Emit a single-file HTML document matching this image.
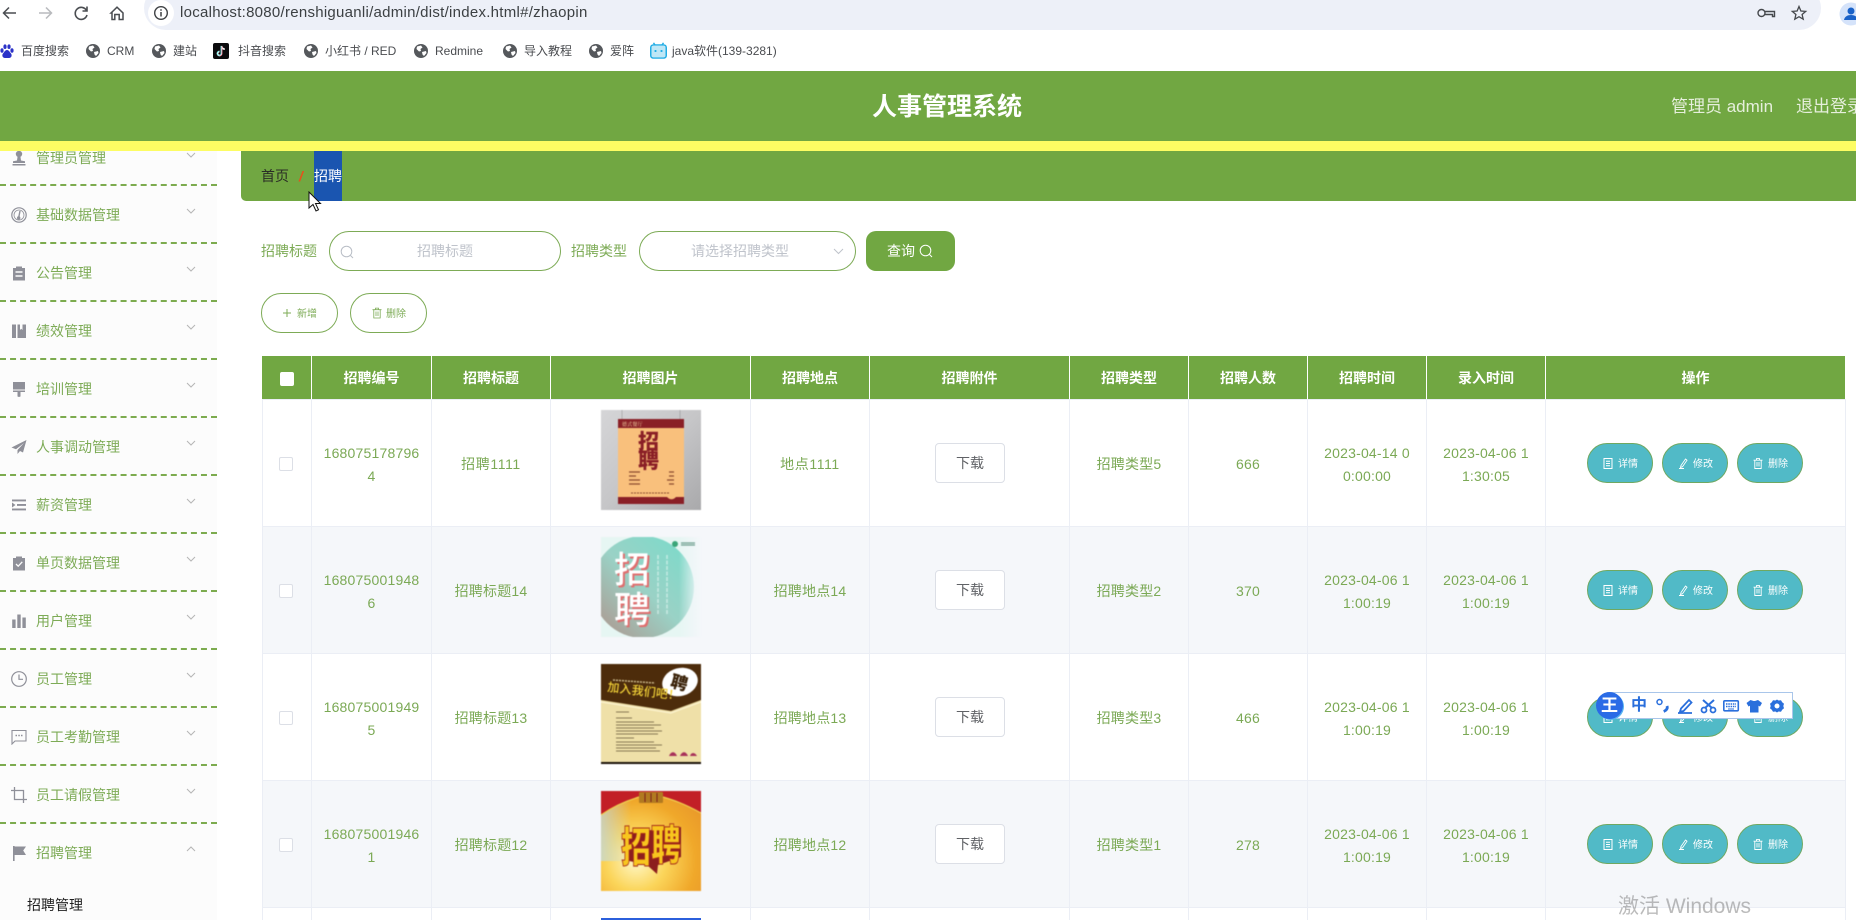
<!DOCTYPE html>
<html lang="zh-CN">
<head>
<meta charset="utf-8">
<title>人事管理系统</title>
<style>
*{box-sizing:border-box}
html,body{margin:0;padding:0;width:1856px;height:920px;overflow:hidden;background:#fff}
body{position:relative;font-family:"Liberation Sans","Noto Sans CJK SC",sans-serif;font-size:14px}
.a{position:absolute;white-space:nowrap}
svg{display:block}
/* chrome */
#pill{position:absolute;left:144px;top:-14px;width:1677px;height:44px;background:#edf0f8;border-radius:22px}
#infoc{position:absolute;left:148px;top:0;width:26px;height:26px;border-radius:13px;background:#fff}
.bm{position:absolute;top:43px;font-size:12px;line-height:16px;color:#4a4c50;white-space:nowrap}
/* header */
#hd{position:absolute;left:0;top:71px;width:1856px;height:70px;background:#71a742;z-index:5}
#yl{position:absolute;left:0;top:141px;width:1856px;height:10px;background:#fdfd63;z-index:5}
#bc{position:absolute;left:241px;top:151px;width:1615px;height:50px;background:#71a742;border-radius:0 0 0 5px;z-index:2}
/* sidebar */
#sb{position:absolute;left:0;top:151px;width:217px;height:769px;background:#fcfcfc}
.it{position:absolute;left:0;width:217px;height:58px;border-bottom:2px dashed #7cab4e}
.it span{position:absolute;left:36px;top:20px;line-height:18px;color:#7dab56;font-size:14px}
.it .ic{position:absolute;left:11px;top:21px}
.it .ch{position:absolute;left:186px;top:22px}
/* form */
.lab{position:absolute;top:241px;line-height:20px;color:#7dab56;font-size:14px}
.inp{position:absolute;top:231px;height:40px;border:1px solid #7dab56;border-radius:20px;background:#fff}
.ph{position:absolute;top:241px;line-height:20px;color:#bfc3cb;font-size:14px;white-space:nowrap}
#q{position:absolute;left:866px;top:231px;width:89px;height:40px;background:#71a742;border-radius:10px}
.ob{position:absolute;top:293px;width:77px;height:40px;border:1px solid #7dab56;border-radius:20px;background:#fff}
.ob b{position:absolute;top:13px;font-weight:400;font-size:10px;line-height:16px;color:#7dab56}
/* table */
table{position:absolute;left:262px;top:356px;width:1584px;border-collapse:separate;border-spacing:0;table-layout:fixed}
th{height:43px;background:#71a742;color:#fff;font-size:14px;font-weight:700;border-right:1px solid #fff;padding:0;text-align:center}
td{height:127px;border-right:1px solid #ebeef5;border-top:1px solid #ebeef5;padding:3px 10px 0;text-align:center;color:#7ba955;font-size:14px;line-height:23px;letter-spacing:.2px}
tr.s td{background:#f5f7fa}
td.l{border-left:1px solid #ebeef5;padding:1px 3px 0 0}
td.c{padding:0 10px}
td.m{padding:0 0 6px}
td.w{letter-spacing:.6px}
tr.e td{height:13px;padding:0;vertical-align:top}
.cb{display:inline-block;width:14px;height:14px;border:1px solid #dcdfe6;border-radius:2px;background:#fff;vertical-align:middle}
th .cb{background:#fff;border-color:#fff}
.imgc{display:block;width:100px;height:100px;margin:0 auto;filter:blur(.5px);overflow:hidden}
.dl{display:block;width:70px;height:40px;margin-left:55px;line-height:38px;border:1px solid #dcdfe6;border-radius:4px;background:#fff;color:#606266;font-size:14px;letter-spacing:0}
.ac{display:flex;justify-content:center;gap:9px;margin-left:-12px;margin-right:-12px;padding-right:1px}
.btn{position:relative;width:66px;height:40px;background:#51bac7;border:1px solid #6fa861;border-radius:20px;color:#fff;font-size:10px;line-height:38px;letter-spacing:0}
.btn svg{position:absolute;left:15px;top:14px}
.btn i{position:absolute;left:30px;top:2px;font-style:normal}
/* ime */
#ime{position:absolute;left:1607px;top:692px;width:186px;height:27px;background:#fff;border:1px solid #a9c6ea;z-index:8}
#wang{position:absolute;left:1596px;top:692px;width:27px;height:27px;border-radius:14px;background:#2a6be6;color:#fff;font-size:17px;font-weight:700;line-height:27px;text-align:center;z-index:9;box-shadow:1px 1px 0 #58b4f0}
#win{position:absolute;left:1618px;top:893px;font-size:21px;line-height:28px;color:rgba(120,120,120,.5);z-index:9;white-space:nowrap}
</style>
</head>
<body>
<svg width="0" height="0" style="position:absolute">
 <defs>
  <symbol id="globe" viewBox="0 0 14 14"><circle cx="7" cy="7" r="7" fill="#55585c"/><path d="M3 2.500l4-1 1.500 2-2 1.500.5 2-2 .5-2.500-2.500zM8 8l4-1 .5 2-2.500 3-1.500-1.500z" fill="#fff"/></symbol>
  <symbol id="down" viewBox="0 0 10 6"><path d="M1 1l4 4 4-4" fill="none" stroke="#b5b5b5" stroke-width="1"/></symbol>
  <symbol id="up" viewBox="0 0 10 6"><path d="M1 5l4-4 4 4" fill="none" stroke="#b5b5b5" stroke-width="1"/></symbol>
  <symbol id="doc" viewBox="0 0 10 11"><path d="M1 .5h8v10H1zM3 3.200h4M3 5.500h4M3 7.800h4" fill="none" stroke="#fff" stroke-width="1"/></symbol>
  <symbol id="edit" viewBox="0 0 10 11"><path d="M3 7.500L7.500 1l1.500 1.200L4.500 8.700 2.500 9.500zM1 10.500h5" fill="none" stroke="#fff" stroke-width=".9"/></symbol>
  <symbol id="trash" viewBox="0 0 10 11"><path d="M.5 2.200h9M3.500 2V.6h3V2M1.800 2.200v8.300h6.400V2.200M4 4v4.500M6 4v4.500" fill="none" stroke="#fff" stroke-width=".9"/></symbol>
 </defs>
</svg>

<!-- Browser toolbar -->
<svg class="a" style="left:0;top:0" width="140" height="28" viewBox="0 0 140 28" fill="none">
 <path d="M16 13H4M9 7.500L3.500 13 9 18.500" stroke="#4a4d51" stroke-width="1.500"/>
 <path d="M39 13h12M46 7.500l5.500 5.500-5.500 5.500" stroke="#b8babd" stroke-width="1.500"/>
 <path d="M86.500 10.500A6 6 0 1 0 87 15M87 6.500v4.500h-4.500" stroke="#4a4d51" stroke-width="1.600"/>
 <path d="M111 13l6-5.800 6 5.800v6.500h-3.800v-5h-4.400v5H112v-6.500z" stroke="#4a4d51" stroke-width="1.500"/>
</svg>
<div id="pill"></div>
<div id="infoc"></div>
<svg class="a" style="left:153px;top:5px" width="16" height="16" viewBox="0 0 16 16" fill="none"><circle cx="8" cy="8" r="6.300" stroke="#3e4144" stroke-width="1.400"/><path d="M8 7v4.500M8 4.300v1.500" stroke="#3e4144" stroke-width="1.500"/></svg>
<div class="a" style="left:180px;top:4px;font-size:15px;letter-spacing:.27px;line-height:18px;color:#3c4043">localhost:8080/renshiguanli/admin/dist/index.html#/zhaopin</div>
<svg class="a" style="left:1757px;top:5px" width="52" height="16" viewBox="0 0 52 16" fill="none">
 <circle cx="4.500" cy="8" r="3.500" stroke="#45484c" stroke-width="1.400"/><path d="M8 6.500h9.500v5h-2v-2H8" stroke="#45484c" stroke-width="1.400"/>
 <path d="M42 1.500l1.900 4.500 4.800.4-3.600 3.100 1.100 4.700-4.200-2.500-4.200 2.500 1.100-4.700-3.600-3.100 4.800-.4z" stroke="#45484c" stroke-width="1.300"/>
</svg>
<svg class="a" style="left:1839px;top:2px" width="17" height="24" viewBox="0 0 17 24"><circle cx="12" cy="12" r="11.500" fill="#d5e3fa"/><circle cx="12" cy="9" r="3.500" fill="#1a62c8"/><path d="M5 18c.6-3.500 3.500-5 7-5s6.400 1.500 7 5z" fill="#1a62c8"/></svg>

<!-- Bookmarks -->
<svg class="a" style="left:0;top:44px" width="14" height="15" viewBox="0 0 14 15"><g fill="#2b32c8"><ellipse cx="2" cy="6.500" rx="1.600" ry="2.300"/><ellipse cx="5" cy="2.700" rx="1.600" ry="2.300"/><ellipse cx="9" cy="2.700" rx="1.600" ry="2.300"/><ellipse cx="12" cy="6.500" rx="1.600" ry="2.300"/><path d="M7 6c-2 0-2.500 2-3.800 3.200C1.500 11 2.500 14 5 14h4c2.500 0 3.500-3 1.800-4.800C9.500 8 9 6 7 6z"/></g></svg>
<div class="bm" style="left:21px">百度搜索</div>
<svg class="a" style="left:86px;top:44px" width="14" height="14"><use href="#globe"/></svg>
<div class="bm" style="left:107px">CRM</div>
<svg class="a" style="left:152px;top:44px" width="14" height="14"><use href="#globe"/></svg>
<div class="bm" style="left:173px">建站</div>
<svg class="a" style="left:213px;top:43px" width="16" height="16" viewBox="0 0 16 16"><rect width="16" height="16" rx="2" fill="#0b0b0d"/><path d="M8.500 3v7.500a2 2 0 1 1-2-2M8.500 3c.3 1.800 1.500 3 3.300 3.200" fill="none" stroke="#fff" stroke-width="1.700"/><path d="M8 2.800v7.500a2 2 0 1 1-2-2" fill="none" stroke="#25f4ee" stroke-width=".5"/><path d="M9 3.400v7.500a2 2 0 0 1-2.400 2" fill="none" stroke="#fe2c55" stroke-width=".5"/></svg>
<div class="bm" style="left:238px">抖音搜索</div>
<svg class="a" style="left:304px;top:44px" width="14" height="14"><use href="#globe"/></svg>
<div class="bm" style="left:325px">小红书 / RED</div>
<svg class="a" style="left:414px;top:44px" width="14" height="14"><use href="#globe"/></svg>
<div class="bm" style="left:435px">Redmine</div>
<svg class="a" style="left:503px;top:44px" width="14" height="14"><use href="#globe"/></svg>
<div class="bm" style="left:524px">导入教程</div>
<svg class="a" style="left:589px;top:44px" width="14" height="14"><use href="#globe"/></svg>
<div class="bm" style="left:610px">爱阵</div>
<svg class="a" style="left:650px;top:42px" width="17" height="17" viewBox="0 0 17 17"><path d="M5 3L3.500 .8M12 3l1.500-2.200" stroke="#23ade5" stroke-width="1.400"/><rect x=".8" y="3" width="15.400" height="13" rx="2.500" fill="none" stroke="#23ade5" stroke-width="1.600"/><rect x="1.500" y="3.800" width="14" height="11.400" rx="2" fill="#bfe7f6"/><path d="M5.500 8v2M11.500 8v2" stroke="#23ade5" stroke-width="1.800"/></svg>
<div class="bm" style="left:672px">java软件(139-3281)</div>

<!-- Sidebar -->
<div id="sb"></div>
<div class="it" style="top:129px;height:57px"><svg class="ic" style="top:21px" width="16" height="16" viewBox="0 0 16 16" fill="#8f9099"><circle cx="8" cy="4" r="3.200"/><path d="M6.500 7h3l.5 3.500 4 .8V13H2v-1.700l4-.8z"/><rect x="1.500" y="14" width="13" height="1.500"/></svg><span>管理员管理</span><svg class="ch" style="top:23px" width="10" height="6"><use href="#down"/></svg></div>
<div class="it" style="top:186px"><svg class="ic" width="16" height="16" viewBox="0 0 16 16" fill="none" stroke="#8f9099"><circle cx="8" cy="8" r="7.200" stroke-width="1.200"/><circle cx="8" cy="8" r="5" stroke-width=".8"/><path d="M9 4L7.800 10" stroke-width="1.400"/><circle cx="7.700" cy="11" r="1.200" fill="#8f9099"/></svg><span>基础数据管理</span><svg class="ch" width="10" height="6"><use href="#down"/></svg></div>
<div class="it" style="top:244px"><svg class="ic" width="16" height="16" viewBox="0 0 16 16"><path d="M5 1.500h6V3h3v12.500H2V3h3z" fill="#8f9099"/><path d="M4.500 7h7M4.500 11h7" stroke="#fcfcfc" stroke-width="1.400"/></svg><span>公告管理</span><svg class="ch" width="10" height="6"><use href="#down"/></svg></div>
<div class="it" style="top:302px"><svg class="ic" width="16" height="16" viewBox="0 0 16 16" fill="#8f9099"><rect x="1" y="1.500" width="4" height="13.500"/><path d="M6.500 1.500H9V7l1.200-1.200L11.500 7V1.500H15V15H6.500z"/></svg><span>绩效管理</span><svg class="ch" width="10" height="6"><use href="#down"/></svg></div>
<div class="it" style="top:360px"><svg class="ic" width="16" height="16" viewBox="0 0 16 16" fill="#8f9099"><rect x="2" y="1" width="12" height="7.500"/><path d="M2 9.500h12V11H9.500v4.500L8 16l-1.500-.5V11H2z"/></svg><span>培训管理</span><svg class="ch" width="10" height="6"><use href="#down"/></svg></div>
<div class="it" style="top:418px"><svg class="ic" width="16" height="16" viewBox="0 0 16 16" fill="#8f9099"><path d="M15.500 1L.5 8.500l4.500 1.800L13 4 6.500 11v4l2.500-3 3 1.500z"/></svg><span>人事调动管理</span><svg class="ch" width="10" height="6"><use href="#down"/></svg></div>
<div class="it" style="top:476px"><svg class="ic" width="16" height="16" viewBox="0 0 16 16" fill="#8f9099"><rect x="1" y="2.500" width="14" height="1.900"/><rect x="6" y="7" width="9" height="1.900"/><rect x="1" y="11.500" width="14" height="1.900"/><path d="M1 5.500L4.500 8 1 10.500z"/></svg><span>薪资管理</span><svg class="ch" width="10" height="6"><use href="#down"/></svg></div>
<div class="it" style="top:534px"><svg class="ic" width="16" height="16" viewBox="0 0 16 16"><path d="M5 1.500h6V3h3v12.500H2V3h3z" fill="#8f9099"/><path d="M5 9l2.200 2.200L11.300 6.800" fill="none" stroke="#fcfcfc" stroke-width="1.300"/></svg><span>单页数据管理</span><svg class="ch" width="10" height="6"><use href="#down"/></svg></div>
<div class="it" style="top:592px"><svg class="ic" width="16" height="16" viewBox="0 0 16 16" fill="#8f9099"><rect x="1.200" y="6.500" width="3.400" height="8.500"/><rect x="6.300" y="1.500" width="3.400" height="13.500"/><rect x="11.400" y="4.500" width="3.400" height="10.500"/></svg><span>用户管理</span><svg class="ch" width="10" height="6"><use href="#down"/></svg></div>
<div class="it" style="top:650px"><svg class="ic" width="16" height="16" viewBox="0 0 16 16" fill="none" stroke="#8f9099" stroke-width="1.200"><circle cx="8" cy="8" r="7.300"/><path d="M8 3.500V8.300h4"/></svg><span>员工管理</span><svg class="ch" width="10" height="6"><use href="#down"/></svg></div>
<div class="it" style="top:708px"><svg class="ic" width="16" height="16" viewBox="0 0 16 16" fill="none" stroke="#8f9099" stroke-width="1.100"><path d="M1 1.500h14v10.500H4L1 15z"/><path d="M4.500 6.500h1.500M7.300 6.500h1.500M10 6.500h1.500" stroke-width="1.400"/></svg><span>员工考勤管理</span><svg class="ch" width="10" height="6"><use href="#down"/></svg></div>
<div class="it" style="top:766px"><svg class="ic" width="16" height="16" viewBox="0 0 16 16" fill="none" stroke="#8f9099" stroke-width="1.300"><path d="M3.500 0v12.500H16M0 3.500h12.500V16"/></svg><span>员工请假管理</span><svg class="ch" width="10" height="6"><use href="#down"/></svg></div>
<div class="it" style="top:824px;border:0"><svg class="ic" width="16" height="16" viewBox="0 0 16 16" fill="#8f9099"><rect x="2" y="1" width="1.600" height="15"/><path d="M3.500 1.500H15l-2.800 4 2.800 4.500H3.500z"/></svg><span>招聘管理</span><svg class="ch" width="10" height="6"><use href="#up"/></svg></div>
<div class="a" style="left:27px;top:896px;font-size:14px;line-height:18px;color:#1f1f1f">招聘管理</div>

<!-- Header -->
<div id="hd">
 <div class="a" style="left:872px;top:20px;font-size:25px;line-height:32px;font-weight:700;color:#fff">人事管理系统</div>
 <div class="a" style="left:1671px;top:25px;font-size:17px;line-height:22px;color:#e6efdc">管理员 admin</div>
 <div class="a" style="left:1796px;top:25px;font-size:17px;line-height:22px;color:#e6efdc">退出登录</div>
</div>
<div id="yl"></div>

<!-- Breadcrumb -->
<div id="bc">
 <div class="a" style="left:20px;top:15px;line-height:20px;color:#2a2d26">首页</div>
 <div class="a" style="left:58px;top:15px;line-height:20px;color:#e8501a;font-weight:700;font-style:italic">/</div>
 <div class="a" style="left:73px;top:0;width:28px;height:50px;background:#1a55b0;color:#fff;line-height:50px">招聘</div>
</div>
<svg class="a" style="left:308px;top:191px;z-index:6" width="14" height="21" viewBox="0 0 14 21"><path d="M1 1v16l4-3.500 3 6.500 2.500-1.200-3-6.300H12.500z" fill="#fff" stroke="#111" stroke-width="1"/></svg>

<!-- Search -->
<div class="lab" style="left:261px">招聘标题</div>
<div class="inp" style="left:329px;width:232px"></div>
<svg class="a" style="left:340px;top:245px" width="14" height="14" viewBox="0 0 14 14" fill="none" stroke="#b9bec6"><circle cx="6.500" cy="6.500" r="5.300"/><path d="M10.500 10.500l2.500 2.500"/></svg>
<div class="ph" style="left:417px">招聘标题</div>
<div class="lab" style="left:571px">招聘类型</div>
<div class="inp" style="left:639px;width:217px"></div>
<div class="ph" style="left:691px">请选择招聘类型</div>
<svg class="a" style="left:833px;top:248px" width="11" height="7" viewBox="0 0 11 7"><path d="M1 1l4.500 4.500L10 1" fill="none" stroke="#bfc3cb" stroke-width="1"/></svg>
<div id="q"><div class="a" style="left:21px;top:10px;line-height:20px;color:#fff">查询</div><svg class="a" style="left:53px;top:13px" width="14" height="14" viewBox="0 0 14 14" fill="none" stroke="#fff"><circle cx="6.500" cy="6.500" r="5.300"/><path d="M10.500 10.500l2.500 2.500"/></svg></div>

<div class="ob" style="left:261px"><svg class="a" style="left:20px;top:14px" width="10" height="10" viewBox="0 0 10 10"><path d="M5 1v8M1 5h8" stroke="#7dab56"/></svg><b style="left:35px">新增</b></div>
<div class="ob" style="left:350px"><svg class="a" style="left:21px;top:13px" width="10" height="12" viewBox="0 0 10 11"><path d="M.5 2.200h9M3.500 2V.6h3V2M1.800 2.200v8.300h6.400V2.200M4 4v4.500M6 4v4.500" fill="none" stroke="#7dab56" stroke-width=".8"/></svg><b style="left:35px">删除</b></div>

<!-- Table -->
<table>
<colgroup><col style="width:50px"><col style="width:120px"><col style="width:119px"><col style="width:200px"><col style="width:119px"><col style="width:200px"><col style="width:119px"><col style="width:119px"><col style="width:119px"><col style="width:119px"><col style="width:300px"></colgroup>
<tr><th><span class="cb"></span></th><th>招聘编号</th><th>招聘标题</th><th>招聘图片</th><th>招聘地点</th><th>招聘附件</th><th>招聘类型</th><th>招聘人数</th><th>招聘时间</th><th>录入时间</th><th>操作</th></tr>
<tr>
 <td class="l"><span class="cb"></span></td><td>168075178796<br>4</td><td class="w">招聘1111</td>
 <td class="m"><svg class="imgc" viewBox="0 0 100 100">
  <defs><linearGradient id="g1" x1="0" y1="0" x2="1" y2="1"><stop offset="0" stop-color="#d5d5d7"/><stop offset=".5" stop-color="#c6c6c8"/><stop offset="1" stop-color="#a9a9ab"/></linearGradient></defs>
  <rect width="100" height="100" fill="url(#g1)"/><path d="M21 0v9M79 0v9" stroke="#8c8c8c" stroke-width=".5"/>
  <rect x="17" y="9" width="66" height="85" fill="#f9c07c"/><rect x="17" y="9" width="66" height="9" fill="#8a1f26"/><rect x="17" y="87" width="66" height="7" fill="#8a1f26"/>
  <text x="21" y="16" font-size="5" fill="#f5d9a8" font-family="Noto Serif CJK SC, serif">德式餐厅</text>
  <text x="37" y="39" font-size="21" font-weight="900" fill="#8a1f26" font-family="Noto Sans CJK SC, sans-serif">招</text>
  <text x="37" y="58" font-size="21" font-weight="900" fill="#8a1f26" font-family="Noto Sans CJK SC, sans-serif">聘</text>
  <g stroke="#8a4a30" stroke-width="1.200"><path d="M28 62h11M68 62h5M28 66h7M68 66h5M28 70h11M66 70h7M28 74h11M68 74h5"/><path d="M30 83h38" stroke-dasharray="2 1" stroke-width="1"/></g>
  <path d="M66 87c3 3 6 3 9 0z" fill="#f9c07c"/></svg></td>
 <td class="w">地点1111</td><td class="c"><span class="dl">下载</span></td><td>招聘类型5</td><td>666</td><td>2023-04-14 0<br>0:00:00</td><td>2023-04-06 1<br>1:30:05</td>
 <td class="c"><div class="ac"><div class="btn"><svg width="10" height="11"><use href="#doc"/></svg><i>详情</i></div><div class="btn"><svg width="10" height="11"><use href="#edit"/></svg><i>修改</i></div><div class="btn"><svg width="10" height="11"><use href="#trash"/></svg><i>删除</i></div></div></td>
</tr>
<tr class="s">
 <td class="l"><span class="cb"></span></td><td>168075001948<br>6</td><td>招聘标题14</td>
 <td class="m"><svg class="imgc" viewBox="0 0 100 100">
  <defs><linearGradient id="g2" x1="1" y1="0" x2="0" y2="1"><stop offset="0" stop-color="#77dccb"/><stop offset=".5" stop-color="#9ad2c6"/><stop offset="1" stop-color="#b09088"/></linearGradient><linearGradient id="g2b" x1="0" y1="0" x2="1" y2="0"><stop offset=".78" stop-color="#f4f7fa" stop-opacity="0"/><stop offset="1" stop-color="#f4f7fa"/></linearGradient></defs>
  <rect width="100" height="100" fill="#e6f6f3"/><circle cx="42" cy="50" r="51" fill="url(#g2)"/><rect width="100" height="100" fill="url(#g2b)"/>
  <circle cx="74" cy="7" r="3" fill="#3aa679"/><path d="M80 6h14M80 8h14" stroke="#6f9f90" stroke-width="1.200"/>
  <g font-family="Noto Sans CJK SC, sans-serif" font-size="36" font-weight="500"><text x="15" y="47" fill="#df6f6f">招</text><text x="15" y="87" fill="#df6f6f">聘</text><text x="13" y="45" fill="#fff">招</text><text x="13" y="85" fill="#fff">聘</text></g>
  <path d="M57 18v60M66 18v60" stroke="#eafaf6" stroke-width="1.500" stroke-dasharray="4 1.500" opacity=".6"/></svg></td>
 <td>招聘地点14</td><td class="c"><span class="dl">下载</span></td><td>招聘类型2</td><td>370</td><td>2023-04-06 1<br>1:00:19</td><td>2023-04-06 1<br>1:00:19</td>
 <td class="c"><div class="ac"><div class="btn"><svg width="10" height="11"><use href="#doc"/></svg><i>详情</i></div><div class="btn"><svg width="10" height="11"><use href="#edit"/></svg><i>修改</i></div><div class="btn"><svg width="10" height="11"><use href="#trash"/></svg><i>删除</i></div></div></td>
</tr>
<tr>
 <td class="l"><span class="cb"></span></td><td>168075001949<br>5</td><td>招聘标题13</td>
 <td class="m"><svg class="imgc" viewBox="0 0 100 100">
  <rect width="100" height="100" fill="#efe0a8"/><path d="M0 0h100v36L70 47 0 36z" fill="#4d2c0b"/><path d="M0 38l70 11 30-11" fill="none" stroke="#fff7d8" stroke-width="1"/>
  <ellipse cx="79" cy="18" rx="18" ry="14" fill="#fff" transform="rotate(-15 79 18)"/>
  <text x="70" y="25" font-size="17" font-weight="900" fill="#3a2208" transform="rotate(15 79 18)" font-family="Noto Sans CJK SC, sans-serif">聘</text>
  <text x="6" y="27" font-size="12" font-weight="500" fill="#f3d238" transform="rotate(7 6 27)" font-family="Noto Sans CJK SC, sans-serif">加入我们吧！</text>
  <path d="M12 16l42 3" stroke="#cbb88a" stroke-width="1.500" stroke-dasharray="2 1"/>
  <g stroke="#5a4a30" stroke-width=".9" opacity=".7"><path d="M15 48h13M15 54h16M15 58h38M15 61h45M15 64h38M15 67h46M15 70h42M15 74h18M15 78h38M15 81h46M15 84h40M15 87h44"/></g>
  <path d="M68 92c2-5 6-5 8 0zM79 92c2-5 6-5 8 0zM89 92c1-4 5-4 7 0z" fill="#a8325a"/><rect y="98" width="100" height="2" fill="#1a1208"/></svg></td>
 <td>招聘地点13</td><td class="c"><span class="dl">下载</span></td><td>招聘类型3</td><td>466</td><td>2023-04-06 1<br>1:00:19</td><td>2023-04-06 1<br>1:00:19</td>
 <td class="c"><div class="ac"><div class="btn"><svg width="10" height="11"><use href="#doc"/></svg><i>详情</i></div><div class="btn"><svg width="10" height="11"><use href="#edit"/></svg><i>修改</i></div><div class="btn"><svg width="10" height="11"><use href="#trash"/></svg><i>删除</i></div></div></td>
</tr>
<tr class="s">
 <td class="l"><span class="cb"></span></td><td>168075001946<br>1</td><td>招聘标题12</td>
 <td class="m"><svg class="imgc" viewBox="0 0 100 100">
  <defs><radialGradient id="g4" cx=".35" cy=".7" r=".85"><stop offset="0" stop-color="#fff8c8"/><stop offset=".35" stop-color="#fbd55a"/><stop offset=".7" stop-color="#f0a82a"/><stop offset="1" stop-color="#e8962a"/></radialGradient><linearGradient id="g4b" x1="0" y1="0" x2="1" y2="0"><stop offset="0" stop-color="#bcdcec" stop-opacity=".7"/><stop offset=".3" stop-color="#bcdcec" stop-opacity="0"/></linearGradient></defs>
  <rect width="100" height="100" fill="url(#g4)"/><rect y="10" width="100" height="60" fill="url(#g4b)"/>
  <path d="M0 0h100v22C82 12 72 9 62 6H38C28 9 14 14 0 24z" fill="#c21f26"/><path d="M0 24C14 14 28 9 38 6M100 22C82 12 72 9 62 6" fill="none" stroke="#f0d050" stroke-width="1.200"/>
  <rect x="38" y="1" width="24" height="11" rx="1" fill="#b27a20"/><path d="M44 2v9M50 2v9M56 2v9" stroke="#7a1e1a"/>
  <path d="M22 42L80 36v30L57 74l-1 9-10-9-22-5z" fill="#8c1e1e"/>
  <g font-family="Noto Sans CJK SC, sans-serif" font-size="30" font-weight="900" fill="#f8c61e" stroke="#a62a18" stroke-width=".7"><text transform="translate(20,71) scale(1,1.4)">招</text><text transform="translate(50,69) scale(1,1.4)">聘</text></g></svg></td>
 <td>招聘地点12</td><td class="c"><span class="dl">下载</span></td><td>招聘类型1</td><td>278</td><td>2023-04-06 1<br>1:00:19</td><td>2023-04-06 1<br>1:00:19</td>
 <td class="c"><div class="ac"><div class="btn"><svg width="10" height="11"><use href="#doc"/></svg><i>详情</i></div><div class="btn"><svg width="10" height="11"><use href="#edit"/></svg><i>修改</i></div><div class="btn"><svg width="10" height="11"><use href="#trash"/></svg><i>删除</i></div></div></td>
</tr>
<tr class="e"><td class="l"></td><td></td><td></td><td style="padding-top:10px"><div style="width:100px;height:2px;margin:0 auto;background:#2b5fdc"></div></td><td></td><td></td><td></td><td></td><td></td><td></td><td></td></tr>
</table>

<!-- IME toolbar -->
<div id="ime"></div>
<div id="wang">王</div>
<div class="a" style="left:1631px;top:696px;font-size:16px;line-height:20px;font-weight:700;color:#2a6fdc;z-index:9">中</div>
<svg class="a" style="left:1654px;top:696px;z-index:9" width="136" height="20" viewBox="0 0 136 20" fill="none">
 <circle cx="5.500" cy="6" r="2.500" stroke="#2a6fdc" stroke-width="1.500"/><path d="M13 10c1 2.500-.8 4.500-3.300 5.500" stroke="#2a6fdc" stroke-width="2.800"/>
 <path d="M27 12.500L35 4l2.500 2.500-8 8.500-3.500.7zM24 17h14" stroke="#2a6fdc" stroke-width="1.800"/>
 <path d="M49 4l9 8M60 4l-9 8" stroke="#2a6fdc" stroke-width="2"/><circle cx="50" cy="14" r="2.500" stroke="#2a6fdc" stroke-width="1.800"/><circle cx="59" cy="14" r="2.500" stroke="#2a6fdc" stroke-width="1.800"/>
 <rect x="69.800" y="4.800" width="14.500" height="10" rx="1" stroke="#2a6fdc" stroke-width="1.600"/><path d="M72 8h10M72 10.500h10" stroke="#2a6fdc" stroke-width="1.600" stroke-dasharray="1.500 .8"/><path d="M74 13h6" stroke="#2a6fdc"/>
 <path d="M96.500 4l3 1h1.500l3-1 4 3-2 3.500-1.500-.8V16.500H96V9.700l-1.500.8-2-3.500z" fill="#2a6fdc"/>
 <path fill-rule="evenodd" d="M123 3.500l1.500 1 2.500-.2 1.200 2 1.800 1.500-.7 2.200.7 2.200-1.800 1.500-1.200 2-2.500-.2-1.500 1-1.500-1-2.500.2-1.200-2-1.800-1.500.7-2.200-.7-2.200 1.800-1.500 1.200-2 2.500.2zM123 7.500a2.500 2.500 0 1 0 0 5 2.500 2.500 0 0 0 0-5z" fill="#2a6fdc"/>
</svg>

<div id="win">激活 Windows</div>
</body>
</html>
